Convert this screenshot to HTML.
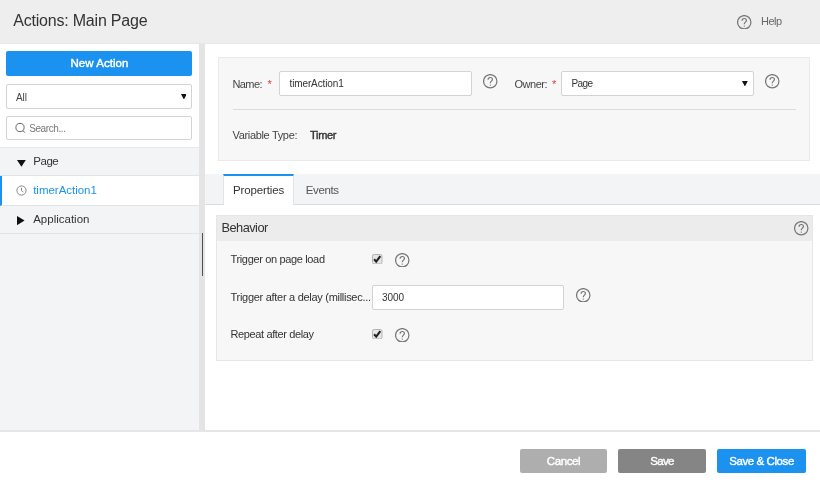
<!DOCTYPE html>
<html><head><meta charset="utf-8">
<style>
*{box-sizing:border-box;margin:0;padding:0}
html,body{width:820px;height:489px;overflow:hidden;background:#fff;font-family:"Liberation Sans",sans-serif;color:#333;font-size:11px}
.abs{position:absolute}
#hdr{left:0;top:0;width:820px;height:44px;background:#eeeeee;border-bottom:1px solid #e7e7e7}
#title{left:13px;top:11px;font-size:16px;color:#2b2b2b;white-space:nowrap;line-height:20px}
#help{left:761px;top:14px;font-size:11px;color:#555;line-height:14px}
#side{left:0;top:44px;width:199px;height:387px;background:#fff}
#sidebg{left:0;top:147px;width:199px;height:284px;background:#f3f4f5}
#split{left:199px;top:44px;width:6px;height:387px;background:#e4e4e4}
#thumb{left:202px;top:233px;width:1.4px;height:43px;background:#505050}
#newbtn{left:6px;top:51px;width:186px;height:24.5px;background:#1b91f0;border-radius:2px;color:#fff;font-weight:bold;font-size:11.5px;text-align:center;line-height:24px}
.box{background:#fff;border:1px solid #d3d3d3;border-radius:2px}
#selAll{left:6px;top:84px;width:186px;height:25px}
#search{left:6px;top:116px;width:186px;height:24px}
.t{position:absolute;white-space:nowrap;line-height:normal}
.row{left:0;width:199px;border-bottom:1px solid #e2e5e8}
.arrow{width:0;height:0;position:absolute}
.down{border-left:5px solid transparent;border-right:5px solid transparent;border-top:7px solid #111}
.right{border-top:5px solid transparent;border-bottom:5px solid transparent;border-left:8px solid #111}
.sdown{border-left:2.8px solid transparent;border-right:2.8px solid transparent;border-top:5.5px solid #111}
#card{left:218px;top:57px;width:592px;height:104px;background:#f7f7f7;border:1px solid #e9e9e9}
#tabs{left:205px;top:174px;width:615px;height:31px;background:#f3f4f6;border-bottom:1px solid #dcdcdc}
#tab1{left:223px;top:174px;width:71px;height:31px;background:#fff;border-top:2px solid #1b91f0;border-left:1px solid #e4e4e4;border-right:1px solid #e4e4e4}
#panel{left:216px;top:215px;width:597px;height:146px;background:#f7f7f7;border:1px solid #e6e6e6}
#phead{left:217px;top:216px;width:595px;height:25px;background:#ececec}
.q{position:absolute;width:14.5px;height:14.5px}
#foot{left:0;top:430px;width:820px;height:59px;background:#fff;border-top:2px solid #e6e6e6}
.btn{top:449px;height:24px;border-radius:2px;color:#fff;font-weight:bold;font-size:11.5px;text-align:center;line-height:23px}
.req{color:#e53935}
</style></head><body><div id="root" style="position:absolute;left:0;top:0;width:820px;height:489px;will-change:transform;background:#fff">
<div class="abs" id="hdr"></div>
<svg class="q" style="left:737.2px;top:14.8px" viewBox="0 0 14 14"><circle cx="7" cy="7" r="6.45" fill="none" stroke="#757575" stroke-width="1.15"/><path d="M4.9 5.6 C4.9 4.2 5.8 3.4 7 3.4 C8.2 3.4 9.1 4.2 9.1 5.3 C9.1 6.9 7 7 7 8.9" fill="none" stroke="#757575" stroke-width="1.15"/><circle cx="7" cy="10.7" r="0.65" fill="#757575"/></svg>

<div class="abs" id="side"></div>
<div class="abs" id="sidebg"></div>
<div class="abs" id="split"></div>
<div class="abs" id="thumb"></div>
<div class="abs" id="newbtn"></div>
<div class="abs box" id="selAll"></div>
<svg class="abs" style="left:180.5px;top:93.8px;width:5.8px;height:5.6px" viewBox="0 0 5.8 5.6"><polygon points="0,0 5.8,0 2.9,5.6" fill="#111"/></svg>
<div class="abs box" id="search"></div>
<svg class="abs" style="left:15px;top:122px;width:11px;height:12px" viewBox="0 0 11 12"><circle cx="5" cy="5.5" r="4.1" fill="none" stroke="#666" stroke-width="1"/><path d="M7.9 8.5 L9.8 10.6" stroke="#666" stroke-width="1" fill="none"/></svg>

<div class="abs row" style="top:147px;height:29px;background:#f3f4f5;border-top:1px solid #e6e8ea"></div>
<svg class="abs" style="left:16.8px;top:160.1px;width:8.8px;height:6.7px" viewBox="0 0 8.8 6.7"><polygon points="0,0 8.8,0 4.4,6.7" fill="#111"/></svg>
<div class="abs row" style="top:176px;height:30px;background:#fff;border-left:2px solid #1b91f0"></div>
<svg class="abs" style="left:15.5px;top:185px;width:11px;height:11px" viewBox="0 0 11 11"><circle cx="5.5" cy="5.5" r="4.6" fill="none" stroke="#888" stroke-width="1"/><path d="M5.5 2.8 V5.7 L7.4 7" stroke="#888" stroke-width="1" fill="none"/></svg>
<div class="abs row" style="top:206px;height:28px;background:#f3f4f5"></div>
<svg class="abs" style="left:17.1px;top:215.5px;width:7.6px;height:9.2px" viewBox="0 0 7.6 9.2"><polygon points="0,0 7.6,4.6 0,9.2" fill="#111"/></svg>

<div class="abs" id="card"></div>
<div class="abs box" style="left:279px;top:71px;width:193px;height:25px"></div>
<svg class="q" style="left:483px;top:74px" viewBox="0 0 14 14"><circle cx="7" cy="7" r="6.45" fill="none" stroke="#757575" stroke-width="1.15"/><path d="M4.9 5.6 C4.9 4.2 5.8 3.4 7 3.4 C8.2 3.4 9.1 4.2 9.1 5.3 C9.1 6.9 7 7 7 8.9" fill="none" stroke="#757575" stroke-width="1.15"/><circle cx="7" cy="10.7" r="0.65" fill="#757575"/></svg>
<div class="abs box" style="left:561px;top:71px;width:193px;height:25px"></div>
<svg class="abs" style="left:742px;top:80.5px;width:5.8px;height:5.6px" viewBox="0 0 5.8 5.6"><polygon points="0,0 5.8,0 2.9,5.6" fill="#111"/></svg>
<svg class="q" style="left:765px;top:74px" viewBox="0 0 14 14"><circle cx="7" cy="7" r="6.45" fill="none" stroke="#757575" stroke-width="1.15"/><path d="M4.9 5.6 C4.9 4.2 5.8 3.4 7 3.4 C8.2 3.4 9.1 4.2 9.1 5.3 C9.1 6.9 7 7 7 8.9" fill="none" stroke="#757575" stroke-width="1.15"/><circle cx="7" cy="10.7" r="0.65" fill="#757575"/></svg>
<div class="abs" style="left:232.5px;top:109px;width:563px;height:1px;background:#dcdcdc"></div>

<div class="abs" id="tabs"></div>
<div class="abs" id="tab1"></div>

<div class="abs" id="panel"></div>
<div class="abs" id="phead"></div>
<svg class="q" style="left:794px;top:221px" viewBox="0 0 14 14"><circle cx="7" cy="7" r="6.45" fill="none" stroke="#757575" stroke-width="1.15"/><path d="M4.9 5.6 C4.9 4.2 5.8 3.4 7 3.4 C8.2 3.4 9.1 4.2 9.1 5.3 C9.1 6.9 7 7 7 8.9" fill="none" stroke="#757575" stroke-width="1.15"/><circle cx="7" cy="10.7" r="0.65" fill="#757575"/></svg>

<svg class="abs" style="left:372px;top:254px;width:10.5px;height:10.4px" viewBox="0 0 10.5 10.4"><rect x="0.5" y="0.5" width="9.5" height="9.4" rx="1.6" fill="#e6e6e6" stroke="#b4b4b4"/><path d="M2.1 5.3 L4.2 7.6 L8.3 2.1" stroke="#222" stroke-width="2.1" fill="none"/></svg>
<svg class="q" style="left:395px;top:252.5px" viewBox="0 0 14 14"><circle cx="7" cy="7" r="6.45" fill="none" stroke="#757575" stroke-width="1.15"/><path d="M4.9 5.6 C4.9 4.2 5.8 3.4 7 3.4 C8.2 3.4 9.1 4.2 9.1 5.3 C9.1 6.9 7 7 7 8.9" fill="none" stroke="#757575" stroke-width="1.15"/><circle cx="7" cy="10.7" r="0.65" fill="#757575"/></svg>

<div class="abs box" style="left:372px;top:285px;width:192px;height:25px"></div>
<svg class="q" style="left:576px;top:287.5px" viewBox="0 0 14 14"><circle cx="7" cy="7" r="6.45" fill="none" stroke="#757575" stroke-width="1.15"/><path d="M4.9 5.6 C4.9 4.2 5.8 3.4 7 3.4 C8.2 3.4 9.1 4.2 9.1 5.3 C9.1 6.9 7 7 7 8.9" fill="none" stroke="#757575" stroke-width="1.15"/><circle cx="7" cy="10.7" r="0.65" fill="#757575"/></svg>

<svg class="abs" style="left:372px;top:329px;width:10.5px;height:10.4px" viewBox="0 0 10.5 10.4"><rect x="0.5" y="0.5" width="9.5" height="9.4" rx="1.6" fill="#e6e6e6" stroke="#b4b4b4"/><path d="M2.1 5.3 L4.2 7.6 L8.3 2.1" stroke="#222" stroke-width="2.1" fill="none"/></svg>
<svg class="q" style="left:395px;top:327.5px" viewBox="0 0 14 14"><circle cx="7" cy="7" r="6.45" fill="none" stroke="#757575" stroke-width="1.15"/><path d="M4.9 5.6 C4.9 4.2 5.8 3.4 7 3.4 C8.2 3.4 9.1 4.2 9.1 5.3 C9.1 6.9 7 7 7 8.9" fill="none" stroke="#757575" stroke-width="1.15"/><circle cx="7" cy="10.7" r="0.65" fill="#757575"/></svg>

<div class="abs" id="foot"></div>
<div class="abs btn" style="left:519.5px;width:87.5px;background:#aeaeae"></div>
<div class="abs btn" style="left:618px;width:87.5px;background:#858585"></div>
<div class="abs btn" style="left:717px;width:88.5px;background:#1b91f0"></div>
<div class="t" id="title" style="left:13.2px;top:11.22px;font-size:16px;color:#333;letter-spacing:-0.203px">Actions: Main Page</div>
<div class="t" id="helpt" style="left:761px;top:14.65px;font-size:11px;color:#666;letter-spacing:-0.542px">Help</div>
<div class="t" id="newa" style="left:70.4px;top:56.59px;font-size:11.5px;color:#fff;-webkit-text-stroke:0.4px currentColor;letter-spacing:0.052px">New Action</div>
<div class="t" id="all" style="left:16px;top:91.65px;font-size:10px;color:#444;letter-spacing:-0.062px">All</div>
<div class="t" id="searcht" style="left:29.2px;top:123.45px;font-size:10px;color:#777;letter-spacing:-0.404px">Search...</div>
<div class="t" id="page" style="left:33.2px;top:155.39px;font-size:11.5px;color:#333;letter-spacing:-0.436px">Page</div>
<div class="t" id="ta1" style="left:33.2px;top:184.19px;font-size:11.5px;color:#1b91f0;letter-spacing:-0.020px">timerAction1</div>
<div class="t" id="app" style="left:33.2px;top:212.59px;font-size:11.5px;color:#333;letter-spacing:0.003px">Application</div>
<div class="t" id="name" style="left:232.5px;top:77.55px;font-size:11px;color:#444;letter-spacing:-0.602px">Name:</div>
<div class="t" id="star1" style="left:267.5px;top:77.55px;font-size:11px;color:#e53935;letter-spacing:0.000px">*</div>
<div class="t" id="nameval" style="left:289.5px;top:77.95px;font-size:10px;color:#333;letter-spacing:-0.121px">timerAction1</div>
<div class="t" id="owner" style="left:514.5px;top:77.55px;font-size:11px;color:#444;letter-spacing:-0.494px">Owner:</div>
<div class="t" id="star2" style="left:552px;top:77.55px;font-size:11px;color:#e53935;letter-spacing:0.000px">*</div>
<div class="t" id="ownval" style="left:571.5px;top:77.95px;font-size:10px;color:#333;letter-spacing:-0.620px">Page</div>
<div class="t" id="vtype" style="left:232.5px;top:129.04px;font-size:11px;color:#444;letter-spacing:-0.332px">Variable Type:</div>
<div class="t" id="timer" style="left:310px;top:129.04px;font-size:11px;color:#333;-webkit-text-stroke:0.4px currentColor;letter-spacing:-0.301px">Timer</div>
<div class="t" id="props" style="left:233px;top:183.79px;font-size:11.5px;color:#333;letter-spacing:-0.130px">Properties</div>
<div class="t" id="events" style="left:305.75px;top:183.79px;font-size:11.5px;color:#555;letter-spacing:-0.384px">Events</div>
<div class="t" id="behav" style="left:221.5px;top:220.42px;font-size:12.8px;color:#333;letter-spacing:-0.538px">Behavior</div>
<div class="t" id="r1" style="left:230.5px;top:252.84px;font-size:11px;color:#333;letter-spacing:-0.348px">Trigger on page load</div>
<div class="t" id="r2" style="left:230.5px;top:291.05px;font-size:11px;color:#333;letter-spacing:-0.287px">Trigger after a delay (millisec...</div>
<div class="t" id="v3000" style="left:382px;top:291.95px;font-size:10px;color:#333;letter-spacing:-0.083px">3000</div>
<div class="t" id="r3" style="left:230.5px;top:327.55px;font-size:11px;color:#333;letter-spacing:-0.376px">Repeat after delay</div>
<div class="t" id="cancel" style="left:546.7px;top:454.79px;font-size:11.5px;color:#fff;-webkit-text-stroke:0.4px currentColor;letter-spacing:-0.362px">Cancel</div>
<div class="t" id="save" style="left:650.3px;top:454.79px;font-size:11.5px;color:#fff;-webkit-text-stroke:0.4px currentColor;letter-spacing:-0.673px">Save</div>
<div class="t" id="savec" style="left:729.3px;top:454.79px;font-size:11.5px;color:#fff;-webkit-text-stroke:0.4px currentColor;letter-spacing:-0.426px">Save &amp; Close</div>
</div></body></html>
